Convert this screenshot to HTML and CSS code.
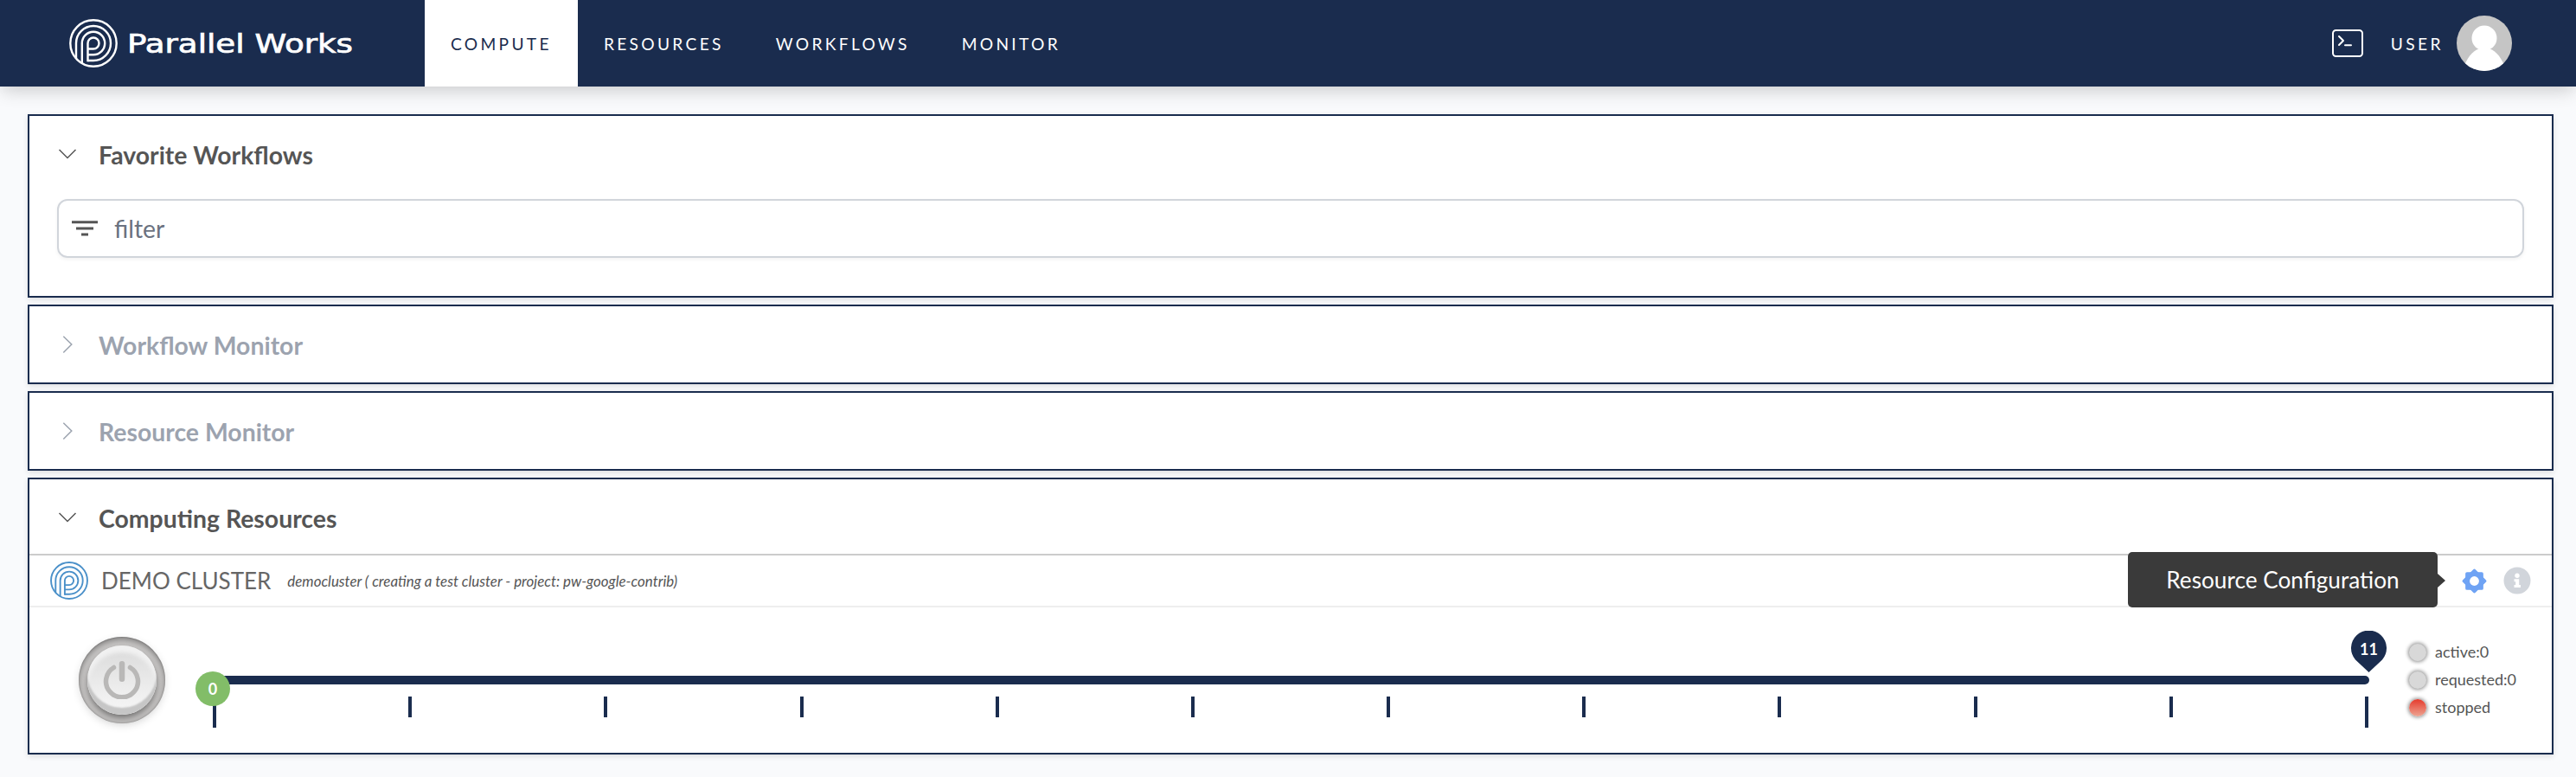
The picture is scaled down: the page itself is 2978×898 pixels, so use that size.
FILE: index.html
```html
<!DOCTYPE html>
<html lang="en">
<head>
<meta charset="utf-8">
<title>Parallel Works</title>
<link rel="stylesheet" href="styles.css">
</head>
<body>
<svg class="defs" width="0" height="0">
  <symbol id="pw-mark" viewBox="0 0 56 56">
    <g fill="none" stroke="currentColor" stroke-width="2.4">
      <circle cx="28" cy="28" r="26.7"/>
      <path d="M8 46V28A20 20 0 1 1 28 48H21.5"/>
      <path d="M14.8 51.5V28A13.2 13.2 0 1 1 28 41.2H21.5"/>
      <path d="M21.5 49.2V28A6.5 6.5 0 1 1 28 34.5H21.5"/>
    </g>
  </symbol>
</svg>

<header class="topbar">
  <a class="brand">
    <svg class="brand-mark"><use href="#pw-mark"/></svg>
    <svg class="brand-name" viewBox="0 0 260 40"><text x="-1" y="31" textLength="261" lengthAdjust="spacingAndGlyphs">Parallel Works</text></svg>
  </a>
  <nav class="nav">
    <a class="nav-item active">COMPUTE</a>
    <a class="nav-item">RESOURCES</a>
    <a class="nav-item">WORKFLOWS</a>
    <a class="nav-item">MONITOR</a>
  </nav>
  <div class="account">
    <svg class="terminal" viewBox="0 0 36 32" fill="none" stroke="#fff" stroke-width="2" stroke-linecap="round" stroke-linejoin="round">
      <rect x="1" y="1" width="34" height="30" rx="3.5"/>
      <path d="M8 8l5 5-5 5M15 18.3h7"/>
    </svg>
    <span class="user">USER</span>
    <svg class="avatar" viewBox="0 0 64 64">
      <clipPath id="round"><circle cx="32" cy="32" r="32"/></clipPath>
      <g clip-path="url(#round)">
        <rect width="64" height="64" fill="#c5c5c5"/>
        <path d="M9 58C13 46 22 38.500 27 38.500H37C42 38.500 51 46 55 58V64H9z" fill="#fff"/>
        <circle cx="32" cy="26" r="14.500" fill="#fff"/>
      </g>
    </svg>
  </div>
</header>

<main class="page">
  <section class="card">
    <div class="card-head">
      <svg class="chev" viewBox="0 0 24 24"><path d="M2.500 7l9.500 9.500L21.500 7"/></svg>
      <h2>Favorite Workflows</h2>
    </div>
    <div class="filter">
      <svg class="filter-icon" viewBox="0 0 30 18"><path d="M0 1.700h30M5 9h20M11 16h8"/></svg>
      <span>filter</span>
    </div>
  </section>

  <section class="card closed">
    <div class="card-head">
      <svg class="chev" viewBox="0 0 24 24"><path d="M7.300 2.700l9.500 9.300L7.300 21.500"/></svg>
      <h2>Workflow Monitor</h2>
    </div>
  </section>

  <section class="card closed">
    <div class="card-head">
      <svg class="chev" viewBox="0 0 24 24"><path d="M7.300 2.700l9.500 9.300L7.300 21.500"/></svg>
      <h2>Resource Monitor</h2>
    </div>
  </section>

  <section class="card">
    <div class="card-head">
      <svg class="chev" viewBox="0 0 24 24"><path d="M2.500 7l9.500 9.500L21.500 7"/></svg>
      <h2>Computing Resources</h2>
    </div>
    <div class="cluster-head">
      <svg class="cluster-mark"><use href="#pw-mark"/></svg>
      <span class="cluster-name">DEMO CLUSTER</span>
      <em class="cluster-desc">democluster ( creating a test cluster - project: pw-google-contrib)</em>
      <div class="cluster-actions">
        <svg class="gear" viewBox="0 0 28 28">
          <g fill="#6fa3f4">
            <rect x="4" y="4" width="20" height="20" rx="1.800"/>
            <rect x="4" y="4" width="20" height="20" rx="1.800" transform="rotate(45 14 14)"/>
          </g>
          <circle cx="14" cy="14" r="5.200" fill="#fff"/>
        </svg>
        <svg class="info" viewBox="0 0 32 32">
          <circle cx="16" cy="16" r="15.500" fill="#d1d5db"/>
          <circle cx="16" cy="10.200" r="2.700" fill="#fff"/>
          <path d="M12.500 14.300h5.700v6.700h1.800v3h-7.500v-3h1.700v-3.700h-1.700z" fill="#fff"/>
        </svg>
        <div class="tooltip">Resource Configuration</div>
      </div>
    </div>
    <div class="cluster-body">
      <div class="power">
        <div class="power-cap">
          <svg viewBox="0 0 44 44" fill="none" stroke="#b9b8b7" stroke-linecap="round">
            <path d="M12.500 7.500A18.500 18.500 0 1 0 31.500 7.500" stroke-width="5.500"/>
            <path d="M22 3.300V20.700" stroke-width="6.500"/>
          </svg>
        </div>
      </div>
      <div class="slider">
        <div class="track"></div>
        <div class="ticks">
          <i class="end"></i><i></i><i></i><i></i><i></i><i></i><i></i><i></i><i></i><i></i><i></i><i class="end"></i>
        </div>
        <div class="stem"></div>
        <div class="handle">0</div>
        <div class="pin">
          <svg viewBox="0 0 41 48"><path d="M20.500 48L5 33.500A20.500 20.500 0 1 1 36 33.500z" fill="#1a2c4e"/></svg>
          <span>11</span>
        </div>
      </div>
      <ul class="status">
        <li><b class="led"></b>active:0</li>
        <li><b class="led"></b>requested:0</li>
        <li><b class="led red"></b>stopped</li>
      </ul>
    </div>
  </section>
</main>
</body>
</html>
```
FILE: styles.css
```css
* { box-sizing: border-box; }
body {
  margin: 0;
  height: 898px;
  overflow: hidden;
  background: #f9fafc;
  color: #555;
  font-family: Lato, "Open Sans", sans-serif;
}
svg { display: block; flex: none; }
.defs { position: absolute; }

.topbar {
  position: relative;
  display: flex;
  height: 100px;
  background: #1a2c4e;
  box-shadow: 0 6px 20px -2px rgba(0, 0, 0, .2);
}
.brand {
  display: flex;
  align-items: center;
  width: 491px;
  padding-left: 80px;
  color: #fff;
}
.brand-mark { width: 56px; height: 56px; }
.brand-name { width: 260px; height: 40px; margin-left: 12px; overflow: visible; }
.brand-name text {
  font: 29.500px "DejaVu Sans", sans-serif;
  fill: #fff;
  stroke: #fff;
  stroke-width: .7;
}
.nav { display: flex; }
.nav-item {
  display: flex;
  align-items: center;
  padding: 0 30px;
  color: #fff;
  font-size: 19.200px;
  letter-spacing: 3.300px;
}
.nav-item.active { background: #fff; color: #1a2c4e; }
.account {
  display: flex;
  align-items: center;
  margin-left: auto;
  padding-right: 74px;
  color: #fff;
}
.terminal { width: 36px; height: 32px; }
.user { margin: 0 15px 0 32px; font-size: 19.200px; letter-spacing: 3.400px; }
.avatar { width: 64px; height: 64px; }

.page {
  display: flex;
  flex-direction: column;
  gap: 8px;
  padding: 32px 26px 0 32px;
}
.card {
  border: 2px solid #1a2c4e;
  background: #fff;
  box-shadow: 0 2px 6px rgba(0, 0, 0, .12);
}
.card-head {
  display: flex;
  align-items: center;
  gap: 24px;
  height: 88px;
  padding-left: 32px;
}
.card-head h2 { margin: 0; font-size: 28.400px; line-height: 40px; font-weight: 700; padding-top: 2px; }
.chev { width: 24px; height: 24px; fill: none; stroke: currentColor; stroke-width: 1.500; }
.closed { color: #9ca3af; }

.filter {
  display: flex;
  align-items: center;
  gap: 19px;
  height: 68px;
  margin: 8px 32px 44px;
  padding-left: 15px;
  border: 2px solid #d1d5db;
  border-radius: 12px;
  color: #6b7280;
  font-size: 28.400px;
  box-shadow: 0 2px 4px rgba(0, 0, 0, .05);
}
.filter-icon { width: 30px; height: 18px; stroke: #555; stroke-width: 3; }

.cluster-head {
  display: flex;
  align-items: center;
  height: 62px;
  border-top: 2px solid #ccc;
  border-bottom: 2px solid #eee;
  padding-left: 24px;
  margin-top: -2px;
}
.cluster-mark { width: 44px; height: 44px; color: #4a90c9; }
.cluster-name { margin-left: 15px; color: #666; font-size: 26px; }
.cluster-desc { margin-left: 19px; font-size: 16.900px; }
.cluster-actions {
  position: relative;
  display: flex;
  align-items: center;
  gap: 19px;
  margin-left: auto;
  padding-right: 24px;
}
.gear { width: 29px; height: 29px; }
.info { width: 32px; height: 32px; }
.tooltip {
  position: absolute;
  right: 132px;
  top: -17px;
  width: 358px;
  height: 64px;
  border-radius: 5px;
  background: #3a3a3a;
  color: #fff;
  font-size: 26.200px;
  line-height: 64px;
  text-align: center;
}
.tooltip::after {
  content: "";
  position: absolute;
  left: 100%;
  top: 25px;
  border: 8px solid transparent;
  border-left: 9px solid #3a3a3a;
  border-right: 0;
}

.cluster-body { display: flex; height: 168px; padding-left: 57px; }
.power {
  width: 100px;
  height: 100px;
  margin-top: 34px;
  padding: 10px;
  border-radius: 50%;
  background: #d4d2d1;
  box-shadow: inset 0 3px 8px rgba(0, 0, 0, .45), inset 0 0 2px rgba(0, 0, 0, .3), 0 3px 10px rgba(0, 0, 0, .12);
}
.power-cap {
  display: grid;
  place-items: center;
  width: 80px;
  height: 80px;
  border-radius: 50%;
  background: linear-gradient(#dadada, #f8f8f8);
  box-shadow: inset 0 -8px 2px #c6c6c6, inset 0 8px 4px #f1f1f1, 0 4px 8px rgba(0, 0, 0, .5);
}
.power-cap svg { width: 44px; height: 44px; }

.slider { position: relative; width: 2493px; margin-left: 55px; padding-top: 79px; }
.track { height: 10px; border-radius: 5px; background: #1a2c4e; }
.ticks { display: flex; justify-content: space-between; padding: 14px 1px 0 0; }
.ticks i { width: 4px; height: 24px; background: #1a2c4e; }
.ticks .end { height: 36px; }
.stem { position: absolute; left: 0; top: 100px; width: 4px; height: 39px; background: #1a2c4e; }
.handle {
  position: absolute;
  left: -20px;
  top: 74px;
  width: 40px;
  height: 40px;
  border-radius: 50%;
  background: #82bd68;
  color: #fff;
  font-size: 18px;
  font-weight: 700;
  line-height: 41px;
  text-align: center;
}
.pin { position: absolute; right: -20px; top: 27px; width: 41px; height: 48px; }
.pin svg { width: 41px; height: 48px; }
.pin span {
  position: absolute;
  inset: 0 0 auto;
  color: #fff;
  font-size: 18px;
  font-weight: 700;
  line-height: 43px;
  text-align: center;
}

.status {
  display: flex;
  flex-direction: column;
  margin: 35px 0 0 46px;
  padding: 0;
  list-style: none;
  font-size: 18px;
}
.status li { display: flex; align-items: center; height: 32px; gap: 10px; }
.led {
  width: 20px;
  height: 20px;
  margin-top: 2px;
  border-radius: 50%;
  background: #d8d8d8;
  box-shadow: 0 0 4px 1px rgba(0, 0, 0, .45);
}
.led.red { background: linear-gradient(#e53a2c, #eda492); }
```
